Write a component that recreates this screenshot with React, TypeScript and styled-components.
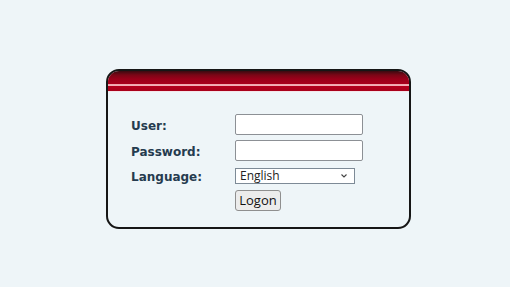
import styled, { createGlobalStyle } from 'styled-components';

const GlobalStyle = createGlobalStyle`
  html, body {
    margin: 0;
    padding: 0;
    background: #eef5f8;
  }
  body {
    font-family: 'Open Sans', 'Noto Sans', sans-serif;
  }
`;

const Page = styled.div`
  width: 510px;
  height: 287px;
  padding: 69px 0 0 106px;
  box-sizing: border-box;
`;

const LoginBox = styled.div`
  width: 305px;
  box-sizing: border-box;
  border: 2px solid #161616;
  border-radius: 13px;
  overflow: hidden;
  background: #eef5f8;
`;

const Header = styled.div`
  height: 20px;
  background: linear-gradient(
    to bottom,
    #3a0a10 0px,
    #7a0616 4px,
    #9a001a 8px,
    #a8001c 13px,
    #f0a4ac 13px,
    #f4b4ba 15px,
    #b4001e 15px,
    #a8001a 20px
  );
  border-bottom: 1px solid #f4e6ea;
`;

const Form = styled.form`
  display: flex;
  flex-direction: column;
  padding: 22px 0 16px 23px;
`;

const Row = styled.div<{ top: number }>`
  display: flex;
  align-items: center;
  margin-top: ${(p) => p.top}px;
`;

const Label = styled.label`
  width: 104px;
  font-family: 'DejaVu Sans', Verdana, sans-serif;
  font-weight: bold;
  font-size: 12px;
  color: #253b4f;
  padding-top: 2px;
`;

const TextInput = styled.input`
  width: 128px;
  height: 21px;
  box-sizing: border-box;
  border: 1px solid #8c9095;
  border-radius: 2px;
  background: #fff;
  margin: 0;
`;

const SelectWrap = styled.div`
  position: relative;
  width: 120px;
  height: 16px;
`;

const Select = styled.select`
  appearance: none;
  display: block;
  width: 120px;
  height: 16px;
  box-sizing: border-box;
  border: 1px solid #7d8a96;
  border-radius: 0;
  background: #fff;
  font-family: 'Open Sans', 'Noto Sans', sans-serif;
  font-size: 12px;
  color: #222;
  padding: 0 0 0 4px;
  margin: 0;
  line-height: 14px;
`;

const Chevron = styled.svg`
  position: absolute;
  right: 8px;
  top: 6px;
  pointer-events: none;
`;

const Spacer = styled.div`
  width: 104px;
`;

const Button = styled.button`
  width: 46px;
  height: 21px;
  box-sizing: border-box;
  border: 1px solid #8f8f8f;
  border-radius: 3px;
  background: #ececec;
  font-family: 'Open Sans', 'Noto Sans', sans-serif;
  font-size: 13px;
  color: #111;
  padding: 0;
  margin: 0;
  line-height: 19px;
`;

const App = () => (
  <>
    <GlobalStyle />
    <Page>
      <LoginBox>
        <Header />
        <Form onSubmit={(e) => e.preventDefault()}>
          <Row top={0}>
            <Label>User:</Label>
            <TextInput type='text' />
          </Row>
          <Row top={5}>
            <Label>Password:</Label>
            <TextInput type='password' />
          </Row>
          <Row top={7}>
            <Label>Language:</Label>
            <SelectWrap>
              <Select defaultValue='en'>
                <option value='en'>English</option>
              </Select>
              <Chevron width='6' height='4' viewBox='0 0 6 4'>
                <path d='M0.5 0.5 L3 3 L5.5 0.5' fill='none' stroke='#444' strokeWidth='1.1' />
              </Chevron>
            </SelectWrap>
          </Row>
          <Row top={6}>
            <Spacer />
            <Button type='submit'>Logon</Button>
          </Row>
        </Form>
      </LoginBox>
    </Page>
  </>
);

export default App;
